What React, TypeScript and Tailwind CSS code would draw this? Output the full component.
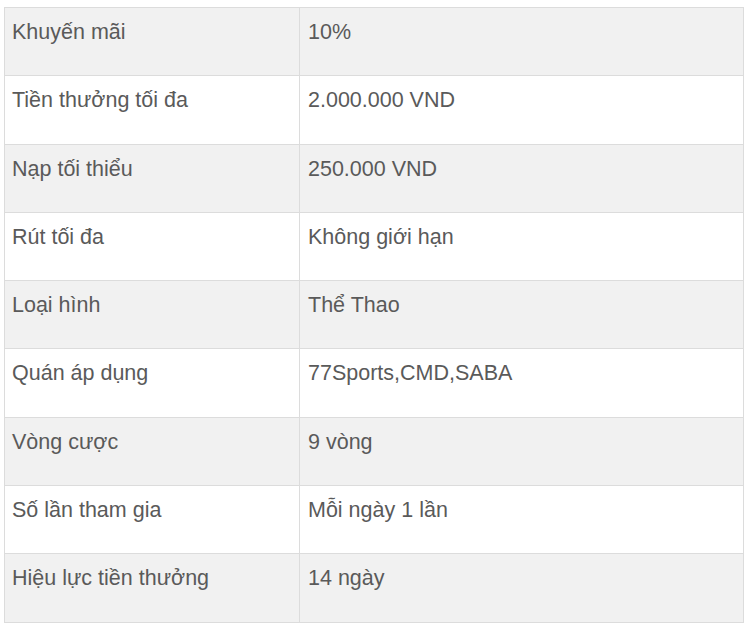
import React from "react";

const rows: [string, string][] = [
  ["Khuyến mãi", "10%"],
  ["Tiền thưởng tối đa", "2.000.000 VND"],
  ["Nạp tối thiểu", "250.000 VND"],
  ["Rút tối đa", "Không giới hạn"],
  ["Loại hình", "Thể Thao"],
  ["Quán áp dụng", "77Sports,CMD,SABA"],
  ["Vòng cược", "9 vòng"],
  ["Số lần tham gia", "Mỗi ngày 1 lần"],
  ["Hiệu lực tiền thưởng", "14 ngày"],
];

export default function App() {
  return (
    <div className="w-[750px] h-[635px] bg-white pt-[7px] pl-[4px]" style={{ fontFamily: '"Liberation Sans", Arial, sans-serif' }}>
      <div className="w-[740px] border border-[#dcdcdc] border-b-0">
        {rows.map(([k, v], i) => (
          <div
            key={i}
            className={`flex h-[68.3px] border-b border-[#dcdcdc] ${i % 2 === 0 ? "bg-[#f1f1f1]" : "bg-white"}`}
          >
            <div className="w-[295px] shrink-0 border-r border-[#dcdcdc] pl-[7px] pt-[12px] text-[21.5px] leading-[24px] text-[#5a5a5a]">
              {k}
            </div>
            <div className="flex-1 pl-[8px] pt-[12px] text-[21.5px] leading-[24px] text-[#5a5a5a]">
              {v}
            </div>
          </div>
        ))}
      </div>
    </div>
  );
}
